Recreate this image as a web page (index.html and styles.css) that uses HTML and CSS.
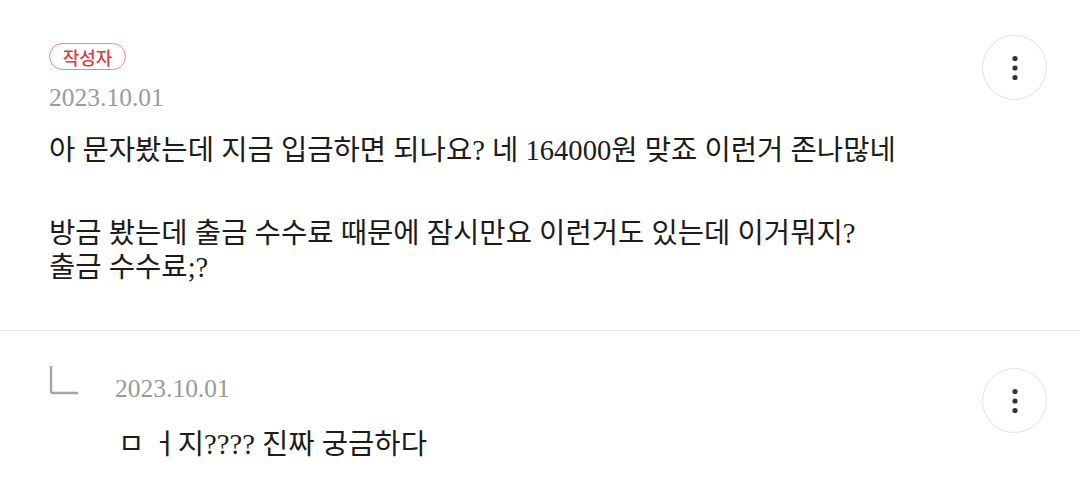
FILE: index.html
```html
<!DOCTYPE html>
<html lang="ko">
<head>
<meta charset="utf-8">
<link rel="stylesheet" href="styles.css">
</head>
<body>
<div class="comment">
  <div class="body">
    <span class="badge">작성자</span>
    <div class="date">2023.10.01</div>
    <p class="text">아 문자봤는데 지금 입금하면 되나요? 네 164000원 맞죠 이런거 존나많네</p>
    <p class="text second">방금 봤는데 출금 수수료 때문에 잠시만요 이런거도 있는데 이거뭐지?<br>출금 수수료;?</p>
  </div>
  <button class="more" aria-label="more">
    <svg width="10" height="26" viewBox="0 0 10 26"><circle cx="5" cy="3.5" r="2.6" fill="#333"/><circle cx="5" cy="13" r="2.6" fill="#333"/><circle cx="5" cy="22.5" r="2.6" fill="#333"/></svg>
  </button>
</div>
<div class="reply">
  <svg class="corner" width="30" height="30" viewBox="0 0 30 30"><path d="M2 0 V25 Q2 27 4 27 H29" fill="none" stroke="#a6a6a6" stroke-width="2.4"/></svg>
  <div class="body reply-body">
    <div class="date">2023.10.01</div>
    <p class="text reply-text">ㅁ ㅓ지???? 진짜 궁금하다</p>
  </div>
  <button class="more" aria-label="more">
    <svg width="10" height="26" viewBox="0 0 10 26"><circle cx="5" cy="3.5" r="2.6" fill="#333"/><circle cx="5" cy="13" r="2.6" fill="#333"/><circle cx="5" cy="22.5" r="2.6" fill="#333"/></svg>
  </button>
</div>
</body>
</html>
```
FILE: styles.css
```css
html, body {
  margin: 0;
  background: #ffffff;
}
body {
  font-family: "Liberation Serif", "Noto Sans CJK KR", serif;
  color: #1c1c1c;
  width: 1080px;
  height: 497px;
  overflow: hidden;
}
.comment {
  display: flex;
  align-items: flex-start;
  padding: 35px 33px 45px 49px;
  border-bottom: 1px solid #e6e6e6;
}
.body {
  flex: 1;
  display: flex;
  flex-direction: column;
  align-items: flex-start;
}
.badge {
  margin-top: 8px;
  box-sizing: border-box;
  height: 27px;
  width: 77px;
  border: 1.6px solid #e5888d;
  border-radius: 14px;
  color: #d63d45;
  font-family: "Noto Sans CJK KR", "Noto Sans", sans-serif;
  font-size: 18px;
  font-weight: 500;
  display: flex;
  align-items: center;
  justify-content: center;
  line-height: 1;
}
.date {
  margin-top: 13px;
  font-size: 25.5px;
  line-height: 30px;
  color: #9a9a9a;
}
.text {
  margin: 21px 0 0;
  font-size: 28.6px;
  line-height: 34px;
}
.text.second {
  margin-top: 49px;
}
.more {
  width: 65px;
  height: 65px;
  border-radius: 50%;
  border: 1px solid #e3e3e3;
  background: #fff;
  padding: 0;
  display: flex;
  align-items: center;
  justify-content: center;
  flex: none;
}
.reply {
  display: flex;
  align-items: flex-start;
  padding: 37px 33px 0 49px;
}
.corner {
  flex: none;
  margin-top: -2px;
  margin-right: 36px;
}
.reply-body .date {
  margin-top: 6px;
}
.reply-text {
  margin-top: 24px;
  padding-left: 3px;
}
```
